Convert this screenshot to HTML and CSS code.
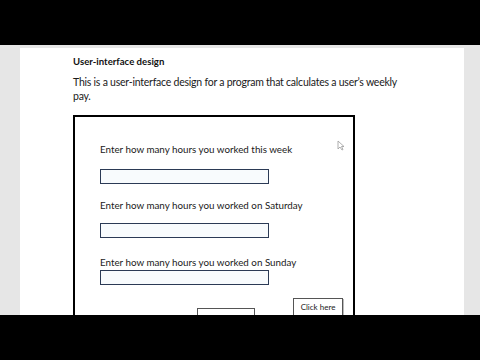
FILE: index.html
```html
<!DOCTYPE html>
<html>
  <head>
    <meta charset="UTF-8">
    <title>User-interface design</title>
    <link rel="stylesheet" href="styles.css">
  </head>
  <body>
    <div class="bar"></div>
    <div id="screen">
      <div id="doc">
        <p class="heading">User-interface design</p>
        <p class="intro">This is a user-interface design for a program that calculates a user’s weekly pay.</p>

        <div id="mockup">
          <svg class="pointer" width="8" height="11" viewBox="0 0 8 11">
            <path d="M1 1 L1 9 L3 7 L5 10 L6 9.5 L4.5 6.5 L7 6.5 Z" fill="#fff" stroke="#9a9a9a" stroke-width="0.8"/>
          </svg>
          <div class="field first">
            <span class="label">Enter how many hours you worked this week</span>
            <span class="textbox"></span>
          </div>
          <div class="field second">
            <span class="label">Enter how many hours you worked on Saturday</span>
            <span class="textbox"></span>
          </div>
          <div class="field third">
            <span class="label">Enter how many hours you worked on Sunday</span>
            <span class="textbox"></span>
          </div>
          <div class="actions">
            <span class="outbox"></span>
            <span class="button">Click here</span>
          </div>
        </div>
      </div>
    </div>
    <div class="bar"></div>
  </body>
</html>
```

FILE: styles.css
```css
html, body {
  margin: 0;
  background: #000;
}
body {
  width: 480px;
  height: 360px;
  overflow: hidden;
  font-family: Lato, "Liberation Sans", sans-serif;
  color: #1a1a1a;
}
.bar {
  height: 45px;
  background: #000;
}
#screen {
  height: 270px;
  overflow: hidden;
  background: #e6e6e6;
  padding: 3px 16px 0 20px;
  box-sizing: border-box;
}
#doc {
  background: #fff;
  height: 400px;
  padding: 7px 40px 0 53px;
}
.heading {
  margin: 0;
  font-size: 9.6px;
  font-weight: bold;
  line-height: 14px;
  color: #111;
}
.intro {
  margin: 6px 0 0 0;
  font-size: 10.5px;
  letter-spacing: -0.23px;
  line-height: 14px;
  width: 340px;
}
#mockup {
  position: relative;
  box-sizing: border-box;
  margin-top: 12px;
  width: 282px;
  height: 230px;
  border: 2px solid #000;
  padding: 0 0 0 25px;
}
.pointer {
  position: absolute;
  top: 23px;
  left: 262px;
}
.field {
  display: flex;
  flex-direction: column;
  align-items: flex-start;
}
.field.first {
  padding-top: 25px;
}
.field.second {
  padding-top: 14px;
}
.field.third {
  padding-top: 17px;
}
.label {
  font-size: 9.8px;
  line-height: 14px;
}
.textbox {
  margin-top: 13px;
  width: 167px;
  height: 13px;
  border: 1px solid #2b3a55;
  background: #f8fbfd;
}
.field.second .textbox {
  margin-top: 11px;
}
.field.third .textbox {
  margin-top: 1px;
}
.actions {
  display: flex;
  align-items: flex-start;
  margin-top: 13px;
}
.outbox {
  margin: 10px 0 0 97px;
  width: 56px;
  height: 20px;
  border: 1px solid #555;
}
.button {
  margin-left: 38px;
  width: 48px;
  height: 16px;
  border: 1px solid #555;
  font-size: 8px;
  line-height: 16px;
  text-align: center;
  box-shadow: 1px 1px 0 #bbb;
}
```
